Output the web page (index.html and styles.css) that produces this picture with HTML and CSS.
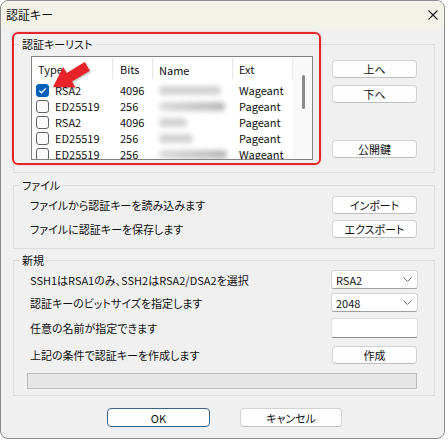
FILE: index.html
```html
<!DOCTYPE html>
<html lang="ja">
<head>
<meta charset="utf-8">
<title>認証キー</title>
<link rel="stylesheet" href="styles.css">
</head>
<body>
<div class="window">
  <div class="titlebar">
    <span class="title">認証キー</span>
    <svg class="close" width="10" height="10" viewBox="0 0 10 10"><path d="M0.5 0.5 L9.5 9.5 M9.5 0.5 L0.5 9.5" stroke="#1a1a1a" stroke-width="1.1" fill="none"/></svg>
  </div>
  <div class="content">
    <fieldset class="group g-list">
      <legend>認証キーリスト</legend>
      <div class="list-row">
        <div class="listview">
          <div class="lv-main">
            <div class="lv-head">
              <div class="hc c-type">Type</div>
              <div class="hc c-bits">Bits</div>
              <div class="hc c-name">Name</div>
              <div class="hc c-ext">Ext</div>
            </div>
            <div class="lv-row">
              <div class="c c-type"><span class="cb checked"><svg width="11" height="11" viewBox="0 0 11 11"><path d="M2.3 5.6 L4.5 7.8 L8.8 3.4" stroke="#fff" stroke-width="1.3" fill="none"/></svg></span>RSA2</div>
              <div class="c c-bits">4096</div>
              <div class="c c-name"><span class="blur" style="width:62px"></span></div>
              <div class="c c-ext">Wageant</div>
            </div>
            <div class="lv-row">
              <div class="c c-type"><span class="cb"></span>ED25519</div>
              <div class="c c-bits">256</div>
              <div class="c c-name"><span class="blur dark" style="width:66px"></span></div>
              <div class="c c-ext">Pageant</div>
            </div>
            <div class="lv-row">
              <div class="c c-type"><span class="cb"></span>RSA2</div>
              <div class="c c-bits">4096</div>
              <div class="c c-name"><span class="blur" style="width:28px"></span></div>
              <div class="c c-ext">Pageant</div>
            </div>
            <div class="lv-row">
              <div class="c c-type"><span class="cb"></span>ED25519</div>
              <div class="c c-bits">256</div>
              <div class="c c-name"><span class="blur" style="width:34px"></span></div>
              <div class="c c-ext">Pageant</div>
            </div>
            <div class="lv-row">
              <div class="c c-type"><span class="cb"></span>ED25519</div>
              <div class="c c-bits">256</div>
              <div class="c c-name"><span class="blur dark" style="width:68px"></span></div>
              <div class="c c-ext">Wageant</div>
            </div>
          </div>
          <div class="lv-scroll"><div class="thumb"></div></div>
        </div>
        <div class="side">
          <button class="btn">上へ</button>
          <button class="btn">下へ</button>
          <button class="btn pub">公開鍵</button>
        </div>
      </div>
    </fieldset>

    <fieldset class="group g-file">
      <legend>ファイル</legend>
      <div class="row">
        <span class="label">ファイルから認証キーを読み込みます</span>
        <button class="btn">インポート</button>
      </div>
      <div class="row r-gap6">
        <span class="label">ファイルに認証キーを保存します</span>
        <button class="btn">エクスポート</button>
      </div>
    </fieldset>

    <fieldset class="group g-new">
      <legend>新規</legend>
      <div class="row">
        <span class="label">SSH1はRSA1のみ、SSH2はRSA2/DSA2を選択</span>
        <div class="select"><span>RSA2</span><svg width="9" height="5" viewBox="0 0 9 5"><path d="M0.5 0.5 L4.5 4.5 L8.5 0.5" stroke="#6a6a6a" fill="none"/></svg></div>
      </div>
      <div class="row r-gap4">
        <span class="label">認証キーのビットサイズを指定します</span>
        <div class="select"><span>2048</span><svg width="9" height="5" viewBox="0 0 9 5"><path d="M0.5 0.5 L4.5 4.5 L8.5 0.5" stroke="#6a6a6a" fill="none"/></svg></div>
      </div>
      <div class="row r-gap6">
        <span class="label">任意の名前が指定できます</span>
        <div class="input"></div>
      </div>
      <div class="row r-gap8">
        <span class="label">上記の条件で認証キーを作成します</span>
        <button class="btn">作成</button>
      </div>
      <div class="progress"></div>
    </fieldset>

    <div class="footer">
      <button class="btn wide default">OK</button>
      <button class="btn wide cancel">キャンセル</button>
    </div>
  </div>

  <div class="highlight"></div>
  <svg class="overlay" width="445" height="439" viewBox="0 0 445 439">
    <polygon points="0,0 19,-12 19,-5 40,-5 40,5 19,5 19,12" fill="#e8232a" transform="translate(53,87) rotate(-31)"/>
  </svg>
</div>
</body>
</html>
```

FILE: styles.css
```css
* { box-sizing: border-box; }

body {
  margin: 0;
  background: #ffffff;
  font-family: "Noto Sans CJK JP", sans-serif;
  font-size: 11px;
  color: #111;
  font-feature-settings: "palt" 1;
}

.window {
  position: relative;
  width: 445px;
  height: 439px;
  border: 1px solid #8c8c8c;
  border-radius: 8px;
  background: #f0f0f0;
  overflow: hidden;
}

.titlebar {
  height: 27px;
  background: #f3f2e9;
  display: flex;
  align-items: center;
  justify-content: space-between;
  padding: 0 6px 0 5px;
}

.title { line-height: 16px; font-size: 12px; }

.content { padding: 0; }

.group {
  margin: 8px 0 0 12px;
  width: 422px;
  border: 1px solid #dcdcdc;
  padding: 4px 17px 12px 16px;
  min-inline-size: auto;
}

.group legend {
  padding: 0 2px;
  margin-left: -10px;
  line-height: 16px;
}

.g-file { margin-top: 4px; padding-top: 3px; padding-bottom: 10px; }
.g-new { margin-top: 3px; padding-top: 2px; padding-bottom: 6px; }

.list-row {
  display: flex;
  justify-content: space-between;
}

.listview {
  margin-left: 1px;
  width: 282px;
  height: 104px;
  border: 1px solid #828282;
  background: #fff;
  display: flex;
  overflow: hidden;
}

.lv-main { width: 261px; }

.lv-head {
  display: flex;
  height: 25px;
}

.hc {
  position: relative;
  padding-top: 2px;
  line-height: 21px;
}

.hc::after {
  content: "";
  position: absolute;
  right: 0;
  top: 1px;
  height: 21px;
  width: 1px;
  background: #e5e5e5;
}

.lv-row {
  display: flex;
  height: 16px;
  line-height: 16px;
  white-space: nowrap;
}

.c-type { width: 81px; padding-left: 6px; }
.c-bits { width: 40px; padding-left: 7px; }
.c-name { width: 80px; padding-left: 6px; }
.c-ext { width: 60px; padding-left: 6px; }

.lv-row .c-type {
  padding-left: 4px;
  display: flex;
  align-items: center;
}

.cb {
  flex: none;
  width: 13px;
  height: 13px;
  border: 1px solid #616161;
  border-radius: 3px;
  background: #fafafa;
  margin-right: 6px;
  display: flex;
  align-items: center;
  justify-content: center;
}

.cb.checked {
  background: #005fb8;
  border-color: #005fb8;
}

.c-name { display: flex; align-items: center; }

.blur {
  display: block;
  height: 9px;
  border-radius: 4px;
  background: #d2d2d2;
  filter: blur(2.5px);
}

.blur.dark {
  background: linear-gradient(90deg, #dcdcdc, #b8b8b8);
}

.lv-scroll {
  width: 19px;
  background: #f9f9f9;
  position: relative;
}

.thumb {
  position: absolute;
  left: 9px;
  top: 18px;
  width: 3px;
  height: 34px;
  border-radius: 2px;
  background: #8a8a8a;
}

.side {
  display: flex;
  flex-direction: column;
  padding-top: 4px;
}

.btn {
  width: 85px;
  height: 18px;
  padding: 0;
  background: #fdfdfd;
  border: 1px solid #d2d2d2;
  border-bottom-color: #bfbfbf;
  border-radius: 4px;
  font-family: inherit;
  font-size: 11px;
  font-feature-settings: "palt" 1;
  line-height: 16px;
  color: #111;
}

.side .btn + .btn { margin-top: 7px; }
.side .btn.pub { margin-top: 37px; }

.row {
  display: flex;
  align-items: center;
  justify-content: space-between;
}

.label { line-height: 16px; }

.r-gap4 { margin-top: 4px; }
.r-gap6 { margin-top: 6px; }
.r-gap8 { margin-top: 8px; }

.select {
  width: 87px;
  height: 19px;
  margin-right: -1px;
  background: #fff;
  border: 1px solid #d4d4d4;
  border-bottom-color: #a0a0a0;
  border-radius: 3px;
  display: flex;
  align-items: center;
  justify-content: space-between;
  padding: 0 5px 0 4px;
  line-height: 16px;
}

.input {
  width: 87px;
  height: 20px;
  margin-right: -1px;
  background: #fff;
  border: 1px solid #e0e0e0;
  border-bottom-color: #8a8a8a;
  border-radius: 3px;
}

.progress {
  margin: 9px 0 0 -3px;
  width: 390px;
  height: 16px;
  background: #e6e6e6;
  border: 1px solid #bcbcbc;
}

.footer {
  display: flex;
  justify-content: center;
  gap: 30px;
  margin-top: 12px;
  padding-left: 4px;
}

.btn.wide { width: 103px; height: 19px; }
.btn.cancel { width: 102px; }
.btn.default { border-color: #3a6486; }

.highlight {
  position: absolute;
  left: 11px;
  top: 31px;
  width: 309px;
  height: 133px;
  border: 2px solid #e3262d;
  border-radius: 6px;
  box-shadow: 0 0 2px rgba(227, 38, 45, 0.35);
  pointer-events: none;
}

.overlay {
  position: absolute;
  left: -1px;
  top: -1px;
  pointer-events: none;
  filter: drop-shadow(1px 1px 1px rgba(0, 0, 0, 0.3));
}
```
